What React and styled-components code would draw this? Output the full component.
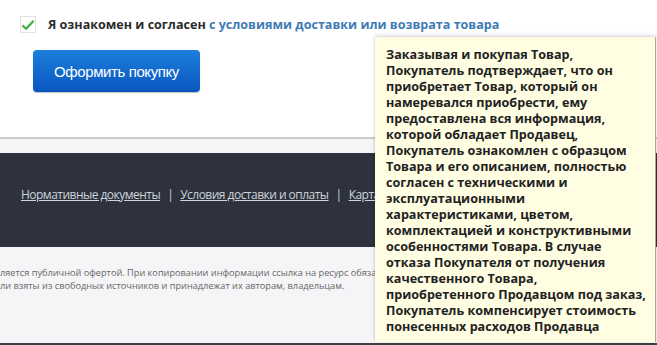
import React from "react";
import styled, { createGlobalStyle } from "styled-components";

const GlobalStyle = createGlobalStyle`
  html, body {
    margin: 0;
    padding: 0;
    width: 657px;
    height: 345px;
    overflow: hidden;
    background: #f5f5f7;
  }
  * { box-sizing: border-box; }
`;

const Page = styled.div`
  position: relative;
  width: 657px;
  height: 345px;
  overflow: hidden;
  font-family: "Open Sans", sans-serif;
  border-bottom: 2px solid #3a3d42;
`;

const Checkout = styled.section`
  height: 139px;
  background: #fff;
  border-bottom: 2px solid #cbcbcb;
  padding: 16px 0 0 20px;
`;

const AgreeRow = styled.label`
  display: flex;
  align-items: center;
  gap: 12px;
  font-size: 12.55px;
  font-weight: 700;
  color: #2b2b2b;
`;

const CheckBox = styled.span`
  width: 16px;
  height: 17px;
  border: 1px solid #e2e2e2;
  background: #fff;
  display: flex;
  align-items: center;
  justify-content: center;
`;

const Link = styled.span`
  color: #3d7bb5;
`;

const BuyButton = styled.button`
  margin: 17px 0 0 13px;
  width: 167px;
  height: 42px;
  border: none;
  border-radius: 4px;
  background: linear-gradient(#1b7fdc, #0a55bf);
  color: #fff;
  font-family: "Liberation Sans", Arial, sans-serif;
  font-size: 15px;
  letter-spacing: -0.4px;
  box-shadow: 0 1px 1px rgba(0, 0, 0, 0.25);
`;

const Gap = styled.div`
  height: 14px;
  background: #f5f5f7;
`;

const DarkFooter = styled.nav`
  height: 94px;
  background: #2d323c;
  display: flex;
  align-items: center;
  padding: 0 0 12px 21px;
  gap: 7px;
  font-size: 12px;
  color: #cfd3dc;
  letter-spacing: -0.52px;
  white-space: nowrap;
`;

const FooterLink = styled.a`
  color: #cfd3dc;
  text-decoration: underline;
`;

const Sep = styled.span`
  color: #cfd3dc;
`;

const Legal = styled.p`
  margin: 0;
  padding: 19px 0 0 0;
  font-size: 9.2px;
  line-height: 13px;
  color: #666;
  white-space: nowrap;
`;

const Tooltip = styled.div`
  position: absolute;
  left: 375px;
  top: 37px;
  width: 281px;
  height: 305px;
  background: #fffee2;
  border-right: 1px solid #a8a59a;
  box-shadow: 0 -2px 4px rgba(0, 0, 0, 0.12), -1px 0 2px rgba(0, 0, 0, 0.08);
  padding: 10px 6px 0 11px;
  font-size: 12.6px;
  font-weight: 700;
  line-height: 16px;
  color: #222;
`;

export default function App() {
  return (
    <Page>
      <GlobalStyle />
      <Checkout>
        <AgreeRow>
          <CheckBox>
            <svg width="15" height="12" viewBox="0 0 15 12">
              <path d="M1.5 6.5 L5.5 10 L13.5 1.5" fill="none" stroke="#3fae49" strokeWidth="2.4" />
            </svg>
          </CheckBox>
          <span>
            Я ознакомен и согласен <Link>с условиями доставки или возврата товара</Link>
          </span>
        </AgreeRow>
        <BuyButton>Оформить покупку</BuyButton>
      </Checkout>
      <Gap />
      <DarkFooter>
        <FooterLink>Нормативные документы</FooterLink>
        <Sep>|</Sep>
        <FooterLink>Условия доставки и оплаты</FooterLink>
        <Sep>|</Sep>
        <FooterLink>Карта сайта</FooterLink>
      </DarkFooter>
      <Legal>
        ляется публичной офертой. При копировании информации ссылка на ресурс обязательна.
        <br />
        ли взяты из свободных источников и принадлежат их авторам, владельцам.
      </Legal>
      <Tooltip>
        Заказывая и покупая Товар, Покупатель подтверждает, что он приобретает Товар, который он
        намеревался приобрести, ему предоставлена вся информация, которой обладает Продавец,
        Покупатель ознакомлен с образцом Товара и его описанием, полностью согласен с техническими и
        эксплуатационными характеристиками, цветом, комплектацией и конструктивными особенностями
        Товара. В случае отказа Покупателя от получения качественного Товара, приобретенного
        Продавцом под заказ, Покупатель компенсирует стоимость понесенных расходов Продавца
      </Tooltip>
    </Page>
  );
}
